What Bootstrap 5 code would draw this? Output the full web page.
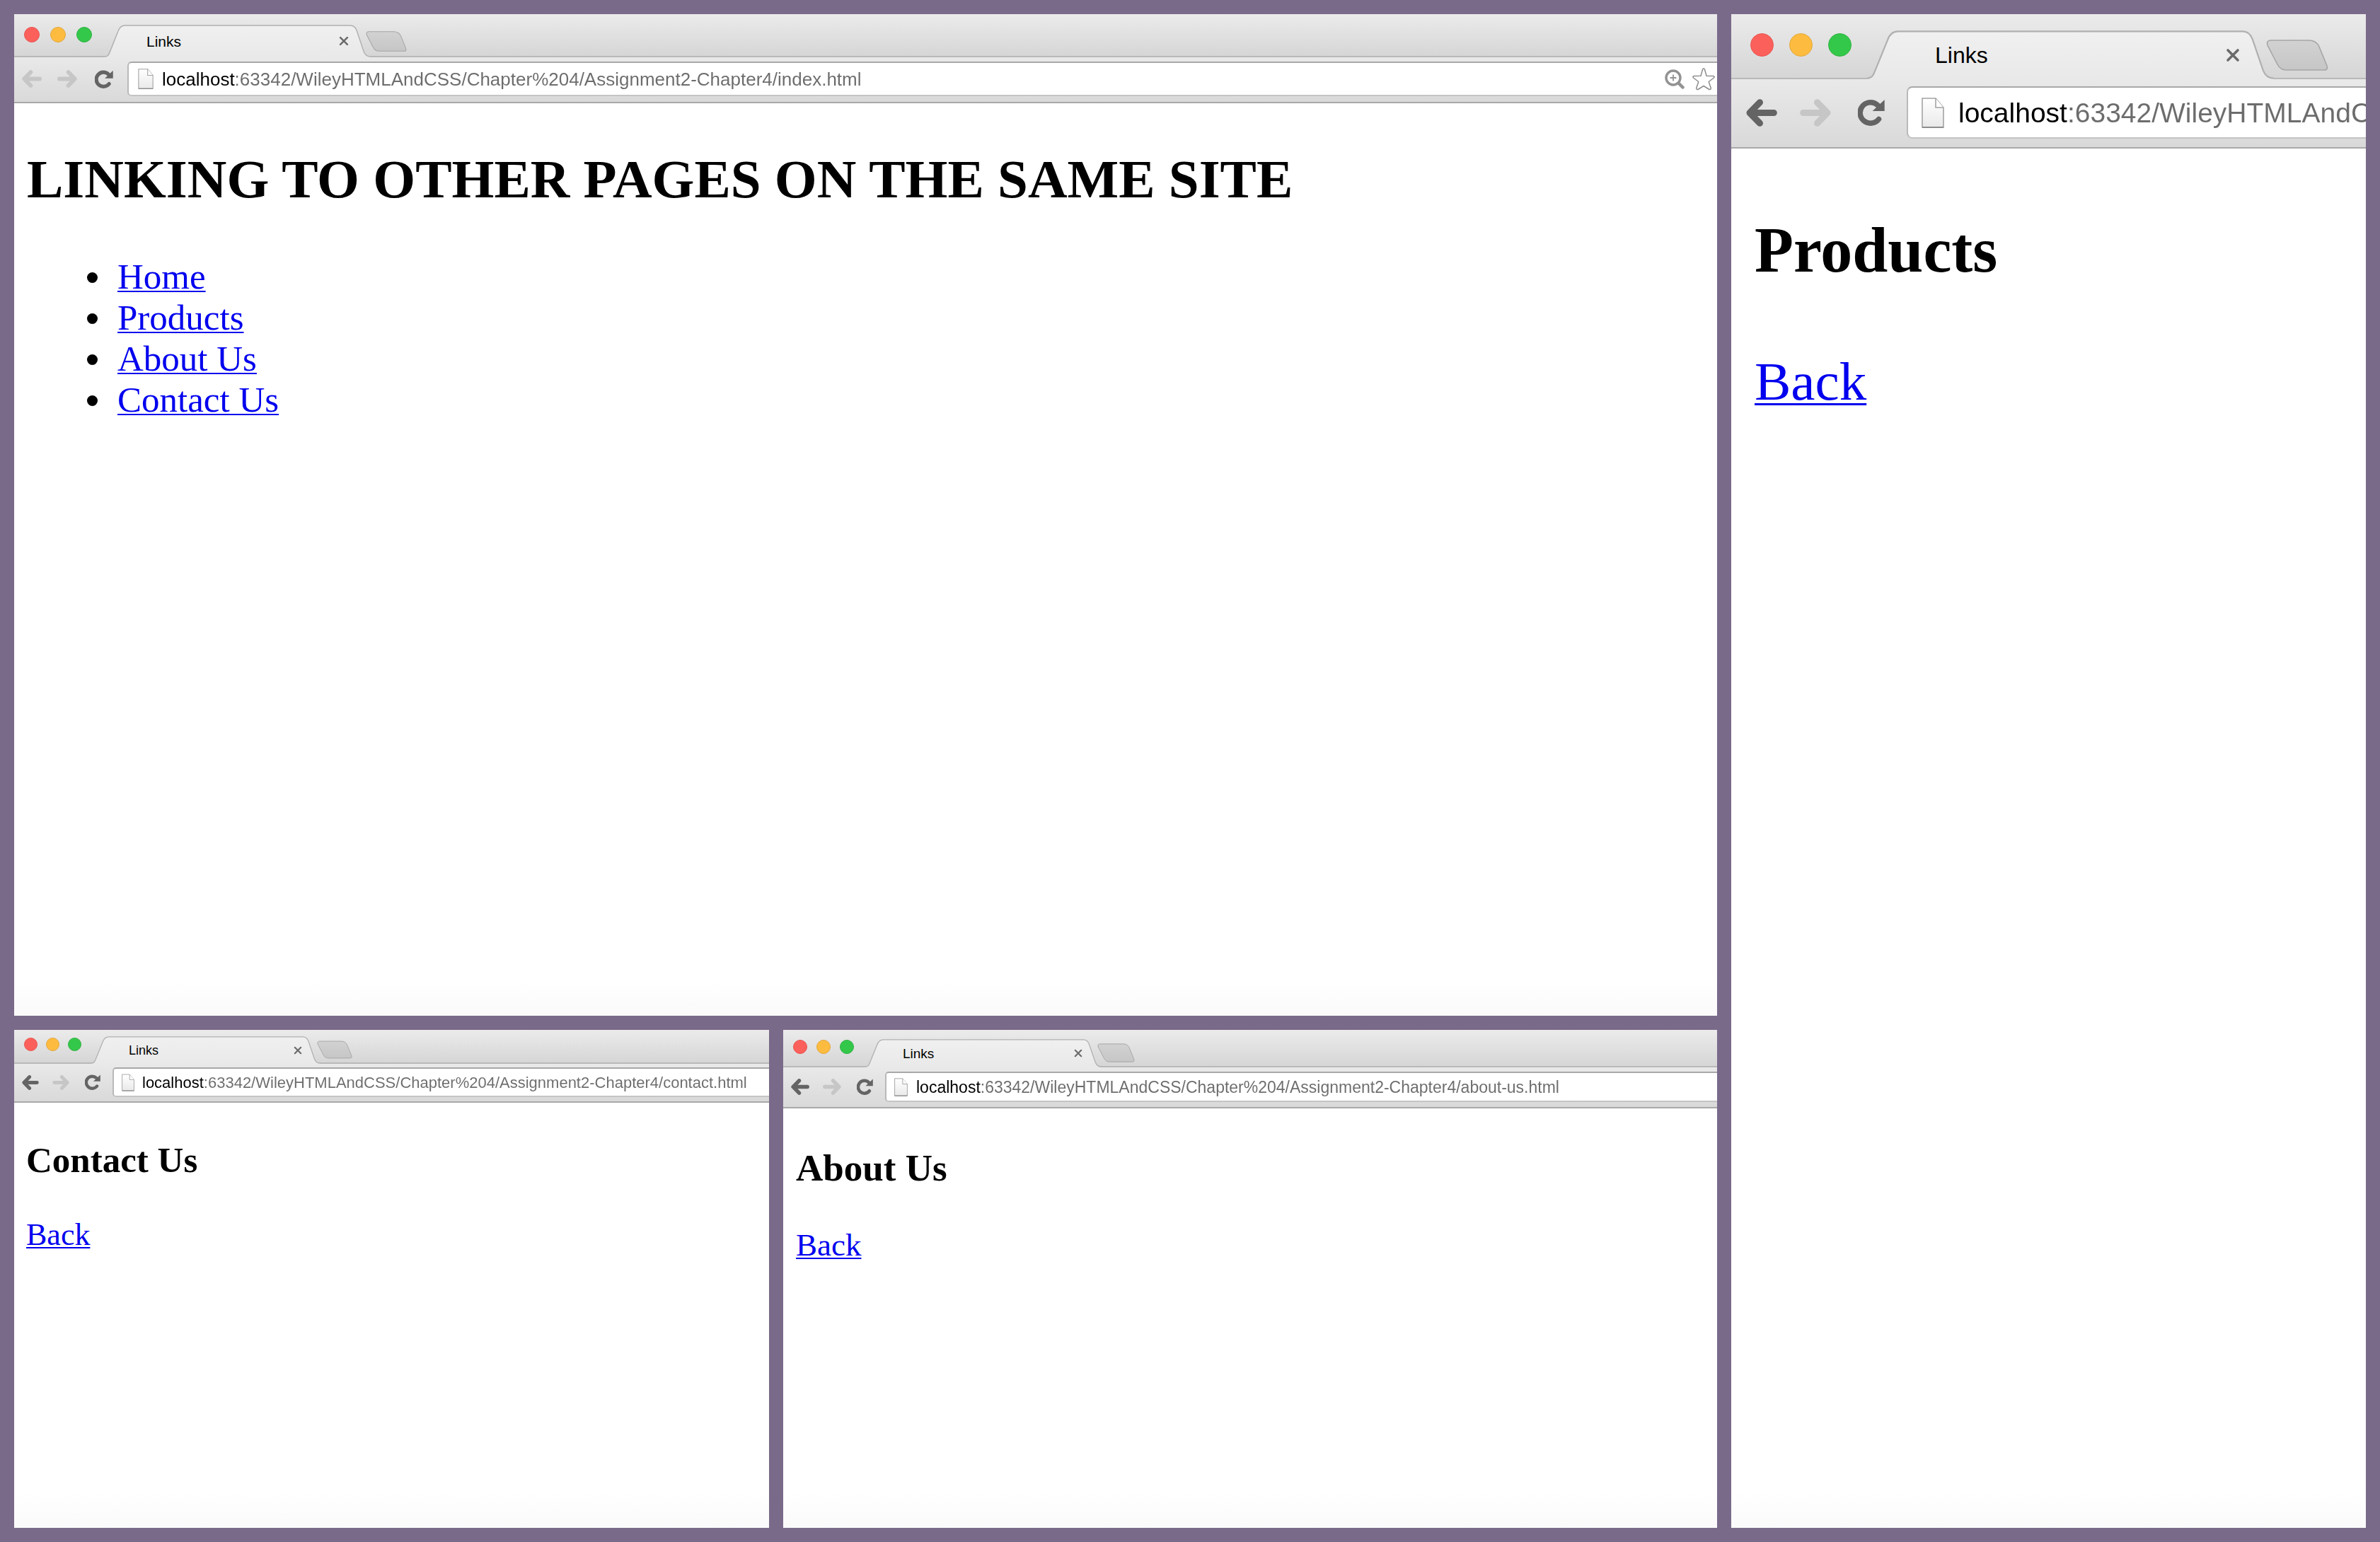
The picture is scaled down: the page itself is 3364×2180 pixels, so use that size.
<!DOCTYPE html>
<html lang="en">
<head>
<meta charset="utf-8">
<meta name="viewport" content="width=device-width, initial-scale=1">
<title>Links</title>
<link href="https://cdn.jsdelivr.net/npm/bootstrap@5.3.0/dist/css/bootstrap.min.css" rel="stylesheet">
<style>
  body { background: #7a6a8a; font-family: "Liberation Sans", Arial, sans-serif; color: #000; }
  .desk { padding: 20px; gap: 20px; min-height: 100vh; }
  .desk-main { flex: 2407 1 0; min-width: 0; gap: 20px; }
  .desk-side { flex: 897 1 0; min-width: 0; }
  .row-top { flex: 1416 1 0; }
  .row-bottom { flex: 704 1 0; gap: 20px; }
  .win-contact { flex: 1067 1 0; min-width: 0; }
  .win-about { flex: 1320 1 0; min-width: 0; }

  /* window sizes: each browser window is zoomed differently */
  .win-home { --strip: 61px; --light: 22px; --light-gap: 15px; --light-x: 14px; --light-y: 18px;
    --tab-x: 18px; --tab-w: 376px; --tab-h: 46px; --tab-pad: 59px; --tab-end: 31px; --tab-font: 21px; --close: 14px;
    --new-x: -7px; --new-y: 24px; --new-w: 58px; --new-h: 29px;
    --bar-x: 11px; --bar-t: 6px; --bar-b: 8px; --cols: 50px 53px 46px 1fr; --ic-w: 28px; --ic-h: 25px; --re: 26px;
    --url-h: 49px; --url-x: 13px; --doc-w: 22px; --doc-h: 29px; --doc-gap: 12px; --url-font: 26px; --host: 103px; --r: 6px; }
  .win-products { --strip: 92px; --light: 33px; --light-gap: 22px; --light-x: 27px; --light-y: 27px;
    --tab-x: 22px; --tab-w: 575px; --tab-h: 69px; --tab-pad: 96px; --tab-end: 48px; --tab-font: 32px; --close: 20px;
    --new-x: -11px; --new-y: 36px; --new-w: 88px; --new-h: 44px;
    --bar-x: 21px; --bar-t: 10px; --bar-b: 12px; --cols: 76px 82px 69px 1fr; --ic-w: 44px; --ic-h: 39px; --re: 38px;
    --url-h: 74px; --url-x: 19px; --doc-w: 32px; --doc-h: 43px; --doc-gap: 20px; --url-font: 39px; --host: 154px; --r: 8px; }
  .win-contact { --strip: 48px; --light: 19px; --light-gap: 12px; --light-x: 14px; --light-y: 11px;
    --tab-x: 14px; --tab-w: 324px; --tab-h: 39px; --tab-pad: 53px; --tab-end: 26px; --tab-font: 18px; --close: 12px;
    --new-x: -5px; --new-y: 15px; --new-w: 50px; --new-h: 26px;
    --bar-x: 11px; --bar-t: 5px; --bar-b: 6px; --cols: 43px 46px 39px 1fr; --ic-w: 24px; --ic-h: 21px; --re: 22px;
    --url-h: 42px; --url-x: 11px; --doc-w: 18px; --doc-h: 25px; --doc-gap: 11px; --url-font: 22px; --host: 87px; --r: 5px; }
  .win-about { --strip: 53px; --light: 20px; --light-gap: 13px; --light-x: 14px; --light-y: 14px;
    --tab-x: 16px; --tab-w: 334px; --tab-h: 40px; --tab-pad: 53px; --tab-end: 27px; --tab-font: 19px; --close: 12px;
    --new-x: -6px; --new-y: 19px; --new-w: 53px; --new-h: 27px;
    --bar-x: 11px; --bar-t: 6px; --bar-b: 7px; --cols: 45px 48px 40px 1fr; --ic-w: 26px; --ic-h: 23px; --re: 23px;
    --url-h: 43px; --url-x: 11px; --doc-w: 19px; --doc-h: 26px; --doc-gap: 12px; --url-font: 23px; --host: 91px; --r: 5px; }

  .win { background: linear-gradient(#fff calc(100% - 48px), #fafafa); overflow: hidden; }
  .strip { height: var(--strip); padding-left: var(--light-x);
    background: linear-gradient(#ebebeb, #d5d5d5); box-shadow: inset 0 -2px #b9b9b9; }
  .lights { gap: var(--light-gap); margin-top: var(--light-y); }
  .light { width: var(--light); height: var(--light); border: 1px solid; border-radius: 50%; padding: 0; }
  .light-close { background: #fc605b; border-color: #e8544f; }
  .light-min { background: #fdbc40; border-color: #e3a73b; }
  .light-max { background: #34c84a; border-color: #2fb141; }
  .tab-shape { width: var(--tab-w); height: var(--tab-h); margin-left: var(--tab-x);
    padding-left: var(--tab-pad); padding-right: var(--tab-end); font-size: var(--tab-font); line-height: 1; z-index: 1; }
  .tab-shape > .tab-bg { position: absolute; inset: 0; width: 100%; height: 100%; z-index: -1; }
  .plain { border: 0; background: none; padding: 0; display: flex; }
  .close-x svg { width: var(--close); height: var(--close); }
  .new-tab { margin-left: var(--new-x); margin-top: var(--new-y); }
  .new-tab svg { width: var(--new-w); height: var(--new-h); }
  .tools { display: grid; grid-template-columns: var(--cols); align-items: center;
    padding: var(--bar-t) 0 var(--bar-b) var(--bar-x); background: linear-gradient(#e9e9e9, #d9d9d9); border-bottom: 2px solid #a9a9a9; }
  .arrow svg { width: var(--ic-w); height: var(--ic-h); color: #646464; }
  .arrow:disabled svg { color: #c6c6c6; }
  .reload svg { width: var(--re); height: var(--re); color: #646464; }
  .url { height: var(--url-h); min-width: 0; padding-left: var(--url-x); background: #fff;
    border: 2px solid #b9b9b9; border-top-color: #a8a8a8; border-bottom-color: #c4c4c4; border-right: 0; border-radius: var(--r) 0 0 var(--r); }
  .url > .doc { width: var(--doc-w); height: var(--doc-h); margin-right: var(--doc-gap); flex: none; }
  .url > input { flex: 1 1 0; min-width: 0; height: 100%; border: 0; padding: 2px 0 0; outline: 0; font-size: var(--url-font);
    color: transparent; background: linear-gradient(90deg, #000 var(--host), #6c6c6c 0); -webkit-background-clip: text; background-clip: text; }
  .url-tools { gap: 11px; padding-right: 3px; }
  .zoom-ic { width: 28px; height: 28px; }
  .star-ic { width: 32px; height: 32px; }

  .doc-page { font-family: "Liberation Serif", "Times New Roman", serif; }
  .doc-page h1, .doc-page h2 { font-weight: 700; color: #000; margin: 0; }
  .doc-page a { color: #00e; text-decoration: underline; text-decoration-skip-ink: none; text-decoration-thickness: 2px; text-underline-offset: 3px; }
  .doc-page p { margin: 0; }
  .page-home { padding: 62px 18px; }
  .page-home h1 { font-size: 77px; line-height: 90px; margin-bottom: 64px; }
  .page-home ul { font-size: 51px; line-height: 58px; padding-left: 122px; margin: 0; }
  .page-home li { padding-left: 6px; }
  .page-products { padding: 92px 33px; }
  .page-products h2 { font-size: 90px; line-height: 104px; margin-bottom: 89px; }
  .page-products p { font-size: 77px; line-height: 88px; }
  .page-products a { text-decoration-thickness: 3px; text-underline-offset: 5px; }
  .page-contact { padding: 52px 17px; }
  .page-contact h2 { font-size: 51px; line-height: 58px; margin-bottom: 52px; }
  .page-contact p { font-size: 44px; line-height: 50px; }
  .page-about { padding: 54px 18px; }
  .page-about h2 { font-size: 53px; line-height: 60px; margin-bottom: 53px; }
  .page-about p { font-size: 45px; line-height: 52px; }
</style>
<script src="https://cdn.jsdelivr.net/npm/bootstrap@5.3.0/dist/js/bootstrap.bundle.min.js"></script>
</head>
<body>
<svg width="0" height="0" class="position-absolute" aria-hidden="true">
  <defs>
    <linearGradient id="gTab" x1="0" y1="0" x2="0" y2="1"><stop offset="0" stop-color="#f0f0f0"/><stop offset="1" stop-color="#e9e9e9"/></linearGradient>
    <linearGradient id="gNew" x1="0" y1="0" x2="0" y2="1"><stop offset="0" stop-color="#d2d2d2"/><stop offset="1" stop-color="#c6c6c6"/></linearGradient>
    <linearGradient id="gDoc" x1="0" y1="0" x2="0" y2="1"><stop offset="0" stop-color="#fff"/><stop offset="1" stop-color="#e9e9e9"/></linearGradient>
    <symbol id="tab" viewBox="0 0 209 25" preserveAspectRatio="none">
      <path d="M0 24.5C2.500 24.500 3.200 23 4 21L10.500 5Q12 .5 16 .5H193Q196.500 .5 198 4.500L203.500 20.500Q205 24.500 209 24.500V25H0Z" fill="url(#gTab)"/>
      <path d="M0 24.5C2.500 24.500 3.200 23 4 21L10.500 5Q12 .5 16 .5H193Q196.500 .5 198 4.500L203.500 20.500Q205 24.500 209 24.500" fill="none" stroke="#b0b0b0" stroke-width=".8"/>
    </symbol>
    <symbol id="newtab" viewBox="0 0 88 44"><path d="M7 1H60Q71 1 75 10L86 37Q88 43 82 43H29Q20 43 16 35L2 8Q0 1 7 1Z" fill="url(#gNew)" stroke="#a6a6a6" stroke-width="1.6"/></symbol>
    <symbol id="x" viewBox="0 0 20 20"><path d="M3 3L17 17M17 3L3 17" fill="none" stroke="#6b6b6b" stroke-width="3.6" stroke-linecap="round"/></symbol>
    <symbol id="back" viewBox="0 0 131 116"><path d="M58 14L15 58L58 102M20 58H117" fill="none" stroke="currentColor" stroke-width="27" stroke-linecap="round" stroke-linejoin="round"/></symbol>
    <symbol id="fwd" viewBox="0 0 131 116"><path d="M73 14L116 58L73 102M111 58H14" fill="none" stroke="currentColor" stroke-width="27" stroke-linecap="round" stroke-linejoin="round"/></symbol>
    <symbol id="reload" viewBox="0 0 116 116"><path d="M90 87A45 45 0 1 1 86 27" fill="none" stroke="currentColor" stroke-width="23" stroke-linecap="round"/><path d="M115 3V52H63Z" fill="currentColor"/></symbol>
    <symbol id="doc" viewBox="0 0 32 43"><path d="M1 1H20L31 14V42H1Z" fill="url(#gDoc)" stroke="#a3a3a3" stroke-width="1.6"/><path d="M20 1V14H31" fill="#fff" stroke="#a3a3a3" stroke-width="1.6"/><path d="M1 42H31" stroke="#8d8d8d" stroke-width="2"/></symbol>
  </defs>
</svg>

<main class="desk d-flex">
  <div class="desk-main d-flex flex-column">
    <section class="win win-home row-top d-flex flex-column" aria-label="Home window">
      <header class="strip d-flex align-items-start">
        <div class="lights d-flex"><button class="light light-close" aria-label="Close window"></button><button class="light light-min" aria-label="Minimise"></button><button class="light light-max" aria-label="Zoom window"></button></div>
        <div class="tab-shape position-relative d-flex align-items-center justify-content-between align-self-end">
          <svg class="tab-bg"><use href="#tab"/></svg><span>Links</span><button class="plain close-x" aria-label="Close tab"><svg><use href="#x"/></svg></button>
        </div>
        <button class="plain new-tab" aria-label="New tab"><svg><use href="#newtab"/></svg></button>
      </header>
      <div class="tools">
        <button class="plain arrow" aria-label="Back" disabled><svg><use href="#back"/></svg></button>
        <button class="plain arrow" aria-label="Forward" disabled><svg><use href="#fwd"/></svg></button>
        <button class="plain reload" aria-label="Reload"><svg><use href="#reload"/></svg></button>
        <div class="url d-flex align-items-center">
          <svg class="doc"><use href="#doc"/></svg>
          <input type="text" aria-label="Address" value="localhost:63342/WileyHTMLAndCSS/Chapter%204/Assignment2-Chapter4/index.html">
          <div class="url-tools d-flex align-items-center">
            <button class="plain" aria-label="Page zoom"><svg class="zoom-ic" viewBox="0 0 28 28" fill="none" stroke="#929292"><circle cx="12" cy="12" r="10" stroke-width="3.400"/><path d="M19.500 19.500L25.500 25.500" stroke-width="4.500" stroke-linecap="round"/><path d="M12 7.500V16.500M7.500 12H16.500" stroke-width="1.800"/></svg></button>
            <button class="plain" aria-label="Bookmark"><svg class="star-ic" viewBox="0 0 32 32"><path d="M14.500 2.200Q16 0 17.500 2.200L20 11.200L29.500 11.400Q32 12 30.500 14L23.200 19.500L26.300 28.500Q26.300 31 24 30.500L16 25.500L8 30.500Q5.700 31 5.700 28.500L8.800 19.500L1.500 14Q0 12 2.500 11.400L12 11.200Z" fill="#fff" stroke="#8c8c8c" stroke-width="1.500" stroke-linejoin="round"/></svg></button>
          </div>
        </div>
      </div>
      <article class="doc-page page-home">
        <h1>LINKING TO OTHER PAGES ON THE SAME SITE</h1>
        <ul>
          <li><a href="#">Home</a></li>
          <li><a href="#">Products</a></li>
          <li><a href="#">About Us</a></li>
          <li><a href="#">Contact Us</a></li>
        </ul>
      </article>
    </section>

    <div class="row-bottom d-flex">
      <section class="win win-contact" aria-label="Contact window">
        <header class="strip d-flex align-items-start">
          <div class="lights d-flex"><button class="light light-close" aria-label="Close window"></button><button class="light light-min" aria-label="Minimise"></button><button class="light light-max" aria-label="Zoom window"></button></div>
          <div class="tab-shape position-relative d-flex align-items-center justify-content-between align-self-end">
            <svg class="tab-bg"><use href="#tab"/></svg><span>Links</span><button class="plain close-x" aria-label="Close tab"><svg><use href="#x"/></svg></button>
          </div>
          <button class="plain new-tab" aria-label="New tab"><svg><use href="#newtab"/></svg></button>
        </header>
        <div class="tools">
          <button class="plain arrow" aria-label="Back"><svg><use href="#back"/></svg></button>
          <button class="plain arrow" aria-label="Forward" disabled><svg><use href="#fwd"/></svg></button>
          <button class="plain reload" aria-label="Reload"><svg><use href="#reload"/></svg></button>
          <div class="url d-flex align-items-center">
            <svg class="doc"><use href="#doc"/></svg>
            <input type="text" aria-label="Address" value="localhost:63342/WileyHTMLAndCSS/Chapter%204/Assignment2-Chapter4/contact.html">
          </div>
        </div>
        <article class="doc-page page-contact">
          <h2>Contact Us</h2>
          <p><a href="#">Back</a></p>
        </article>
      </section>

      <section class="win win-about" aria-label="About window">
        <header class="strip d-flex align-items-start">
          <div class="lights d-flex"><button class="light light-close" aria-label="Close window"></button><button class="light light-min" aria-label="Minimise"></button><button class="light light-max" aria-label="Zoom window"></button></div>
          <div class="tab-shape position-relative d-flex align-items-center justify-content-between align-self-end">
            <svg class="tab-bg"><use href="#tab"/></svg><span>Links</span><button class="plain close-x" aria-label="Close tab"><svg><use href="#x"/></svg></button>
          </div>
          <button class="plain new-tab" aria-label="New tab"><svg><use href="#newtab"/></svg></button>
        </header>
        <div class="tools">
          <button class="plain arrow" aria-label="Back"><svg><use href="#back"/></svg></button>
          <button class="plain arrow" aria-label="Forward" disabled><svg><use href="#fwd"/></svg></button>
          <button class="plain reload" aria-label="Reload"><svg><use href="#reload"/></svg></button>
          <div class="url d-flex align-items-center">
            <svg class="doc"><use href="#doc"/></svg>
            <input type="text" aria-label="Address" value="localhost:63342/WileyHTMLAndCSS/Chapter%204/Assignment2-Chapter4/about-us.html">
          </div>
        </div>
        <article class="doc-page page-about">
          <h2>About Us</h2>
          <p><a href="#">Back</a></p>
        </article>
      </section>
    </div>
  </div>

  <section class="win win-products desk-side" aria-label="Products window">
    <header class="strip d-flex align-items-start">
      <div class="lights d-flex"><button class="light light-close" aria-label="Close window"></button><button class="light light-min" aria-label="Minimise"></button><button class="light light-max" aria-label="Zoom window"></button></div>
      <div class="tab-shape position-relative d-flex align-items-center justify-content-between align-self-end">
        <svg class="tab-bg"><use href="#tab"/></svg><span>Links</span><button class="plain close-x" aria-label="Close tab"><svg><use href="#x"/></svg></button>
      </div>
      <button class="plain new-tab" aria-label="New tab"><svg><use href="#newtab"/></svg></button>
    </header>
    <div class="tools">
      <button class="plain arrow" aria-label="Back"><svg><use href="#back"/></svg></button>
      <button class="plain arrow" aria-label="Forward" disabled><svg><use href="#fwd"/></svg></button>
      <button class="plain reload" aria-label="Reload"><svg><use href="#reload"/></svg></button>
      <div class="url d-flex align-items-center">
        <svg class="doc"><use href="#doc"/></svg>
        <input type="text" aria-label="Address" value="localhost:63342/WileyHTMLAndCSS/Chapter%204/Assignment2-Chapter4/products.html">
      </div>
    </div>
    <article class="doc-page page-products">
      <h2>Products</h2>
      <p><a href="#">Back</a></p>
    </article>
  </section>
</main>
</body>
</html>
